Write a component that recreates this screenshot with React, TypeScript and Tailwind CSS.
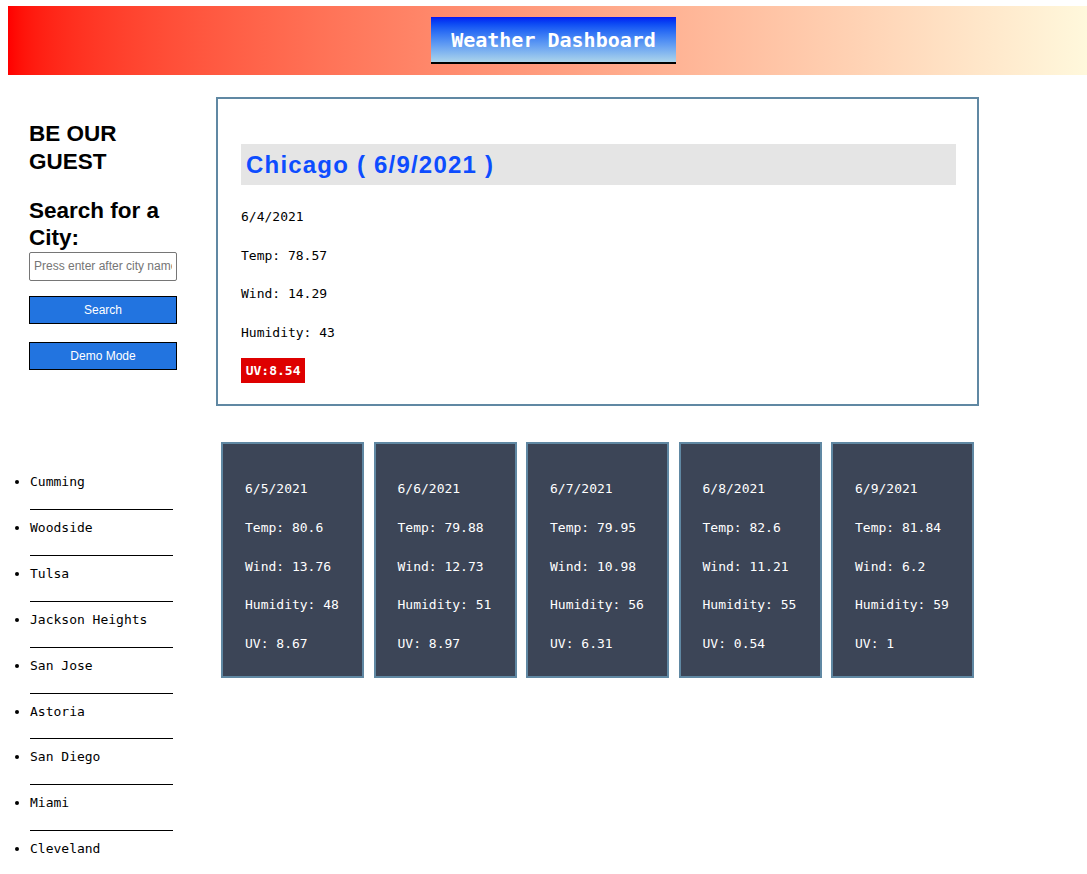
import React from "react";

const mono = { fontFamily: '"DejaVu Sans Mono", "Liberation Mono", monospace' };

const forecast = [
  { date: "6/5/2021", temp: "80.6", wind: "13.76", hum: "48", uv: "8.67" },
  { date: "6/6/2021", temp: "79.88", wind: "12.73", hum: "51", uv: "8.97" },
  { date: "6/7/2021", temp: "79.95", wind: "10.98", hum: "56", uv: "6.31" },
  { date: "6/8/2021", temp: "82.6", wind: "11.21", hum: "55", uv: "0.54" },
  { date: "6/9/2021", temp: "81.84", wind: "6.2", hum: "59", uv: "1" },
];

const cities = [
  "Cumming",
  "Woodside",
  "Tulsa",
  "Jackson Heights",
  "San Jose",
  "Astoria",
  "San Diego",
  "Miami",
  "Cleveland",
];

export default function App() {
  return (
    <div className="min-h-[874px] bg-white text-black font-['Liberation_Sans',Arial,sans-serif]">
      {/* Header */}
      <header className="mt-[6px] ml-[8px] h-[69px] bg-gradient-to-r from-[#ff0000] to-[#fff8dc] flex items-center justify-center pl-[12px]">
        <div className="w-[245px] h-[47px] bg-gradient-to-b from-[#0a12f2] to-[#acd4ea] border-b-2 border-black flex items-center justify-center">
          <h1
            className="text-[20px] font-bold text-white leading-none"
            style={mono}
          >
            Weather Dashboard
          </h1>
        </div>
      </header>

      {/* Row 1 */}
      <div className="flex mt-[22px]">
        <aside className="w-[216px] shrink-0 pl-[29px] pt-[23px]">
          <div className="w-[148px]">
            <h2 className="text-[22.5px] font-bold leading-[27.6px]">BE OUR GUEST</h2>
            <h2 className="text-[22.5px] font-bold leading-[27.6px] mt-[21.5px]">
              Search for a City:
            </h2>
          </div>
          <input
            type="text"
            placeholder="Press enter after city name"
            className="block w-[148px] h-[29px] border border-[#767676] rounded-[2px] px-[4px] text-[12px] placeholder:text-[#757575] outline-none"
          />
          <button className="block mt-[15px] w-[148px] h-[28px] bg-[#2274e0] border-[1.5px] border-black text-white text-[12px]">
            Search
          </button>
          <button className="block mt-[18px] w-[148px] h-[28px] bg-[#2274e0] border-[1.5px] border-black text-white text-[12px]">
            Demo Mode
          </button>
        </aside>

        <main className="w-[763px] border-2 border-[#6088a3] pt-[45px] pl-[23px] pr-[21px] pb-[21px]">
          <h2 className="h-[41px] bg-[#e5e5e5] pl-[5px] text-[24px] tracking-[1.2px] font-bold text-[#0d4dff] leading-[42px]">
            Chicago ( 6/9/2021 )
          </h2>
          <div className="mt-[22px] flex flex-col gap-[18.7px] text-[13px] leading-[20px]" style={mono}>
            <p>6/4/2021</p>
            <p>Temp: 78.57</p>
            <p>Wind: 14.29</p>
            <p>Humidity: 43</p>
          </div>
          <div
            className="mt-[15px] inline-flex items-center h-[25px] px-[4.7px] bg-[#de0000] text-white font-bold text-[13px]"
            style={mono}
          >
            UV:8.54
          </div>
        </main>
      </div>

      {/* Row 2 */}
      <div className="flex mt-[36px]">
        <ul className="w-[216px] shrink-0 pl-[30px] pt-[30px] list-disc text-[13px]" style={mono}>
          {cities.map((c, i) => (
            <li key={c} className={`w-[143px] ${i > 0 ? "mt-[8px]" : ""}`}>
              <div className="leading-[20px] pb-[16.9px] border-b border-black">{c}</div>
            </li>
          ))}
        </ul>

        <section className="flex gap-[9.5px] pl-[5px]">
          {forecast.map((f) => (
            <div
              key={f.date}
              className="w-[143px] h-[236px] border-2 border-[#6088a3] bg-[#3c4557] text-white pt-[35px] pl-[22px] flex flex-col gap-[18.75px] text-[13px] leading-[20px]"
              style={mono}
            >
              <p>{f.date}</p>
              <p>Temp: {f.temp}</p>
              <p>Wind: {f.wind}</p>
              <p>Humidity: {f.hum}</p>
              <p>UV: {f.uv}</p>
            </div>
          ))}
        </section>
      </div>
    </div>
  );
}
